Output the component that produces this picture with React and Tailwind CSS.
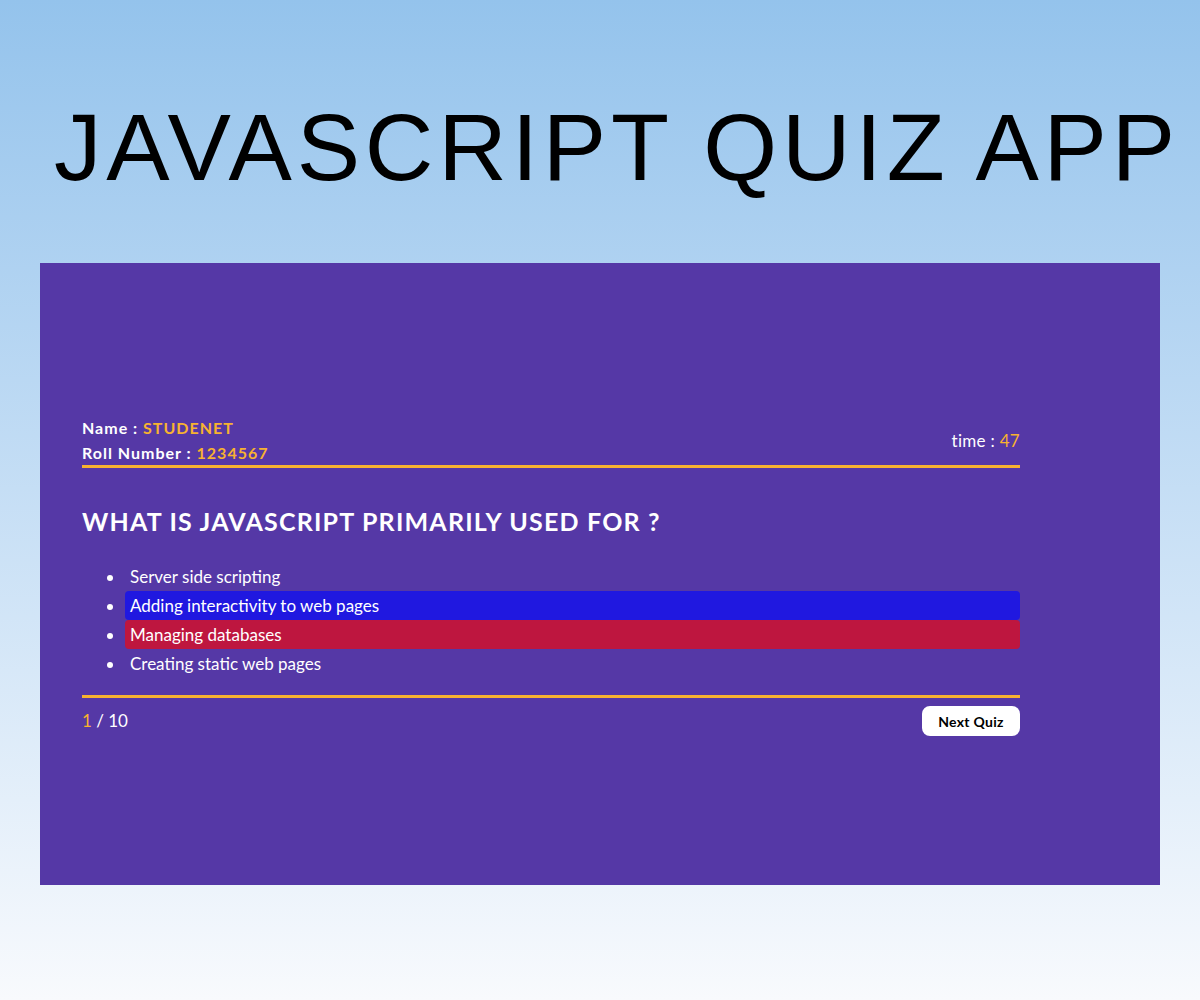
import React, { useState } from "react";

const options = [
  "Server side scripting",
  "Adding interactivity to web pages",
  "Managing databases",
  "Creating static web pages",
];

const App = () => {
  const [correct] = useState(1);
  const [picked] = useState(2);

  return (
    <div className="min-h-screen w-full bg-gradient-to-b from-[#94c3ec] to-[#f8fafd] pt-[100px] pb-[115px] font-['Lato',sans-serif]">
      <h1 className="whitespace-nowrap pl-[54px] text-[95px] leading-none tracking-[4.8px] text-black font-['Liberation_Sans',Arial,sans-serif] font-normal">
        JAVASCRIPT QUIZ APP
      </h1>

      <div className="mx-[40px] mt-[68px] h-[622px] bg-[#5538a6] pt-[152px] pl-[42px]">
        <div className="w-[938px]">
          <div className="flex items-center justify-between border-b-[3px] border-[#f7b230] leading-[25px] text-white">
            <div className="text-[16px] font-bold tracking-[1px]">
              <div>
                Name : <span className="text-[#f7b230]">STUDENET</span>
              </div>
              <div>
                Roll Number : <span className="text-[#f7b230]">1234567</span>
              </div>
            </div>
            <div className="text-[17px] tracking-[0.3px]">
              time : <span className="text-[#f7b230]">47</span>
            </div>
          </div>

          <h2 className="mt-[40px] text-[25px] leading-[26px] font-bold tracking-[1.2px] text-white">
            WHAT IS JAVASCRIPT PRIMARILY USED FOR ?
          </h2>

          <ul className="mt-[28px] list-disc pl-[43px] text-[17px] text-white">
            {options.map((opt, i) => (
              <li
                key={opt}
                className={
                  "h-[29px] rounded-[4px] pl-[5px] leading-[29px] " +
                  (i === correct ? "bg-[#2018e0]" : i === picked ? "bg-[#be163f]" : "")
                }
              >
                {opt}
              </li>
            ))}
          </ul>

          <div className="mt-[17px] flex items-center justify-between border-t-[3px] border-[#f7b230] pt-[8px] text-white">
            <div className="text-[17px]">
              <span className="text-[#f7b230]">1</span> / 10
            </div>
            <button className="h-[30px] w-[98px] rounded-[8px] bg-white text-[14px] font-bold tracking-[0.3px] text-black">
              Next Quiz
            </button>
          </div>
        </div>
      </div>
    </div>
  );
};

export default App;
